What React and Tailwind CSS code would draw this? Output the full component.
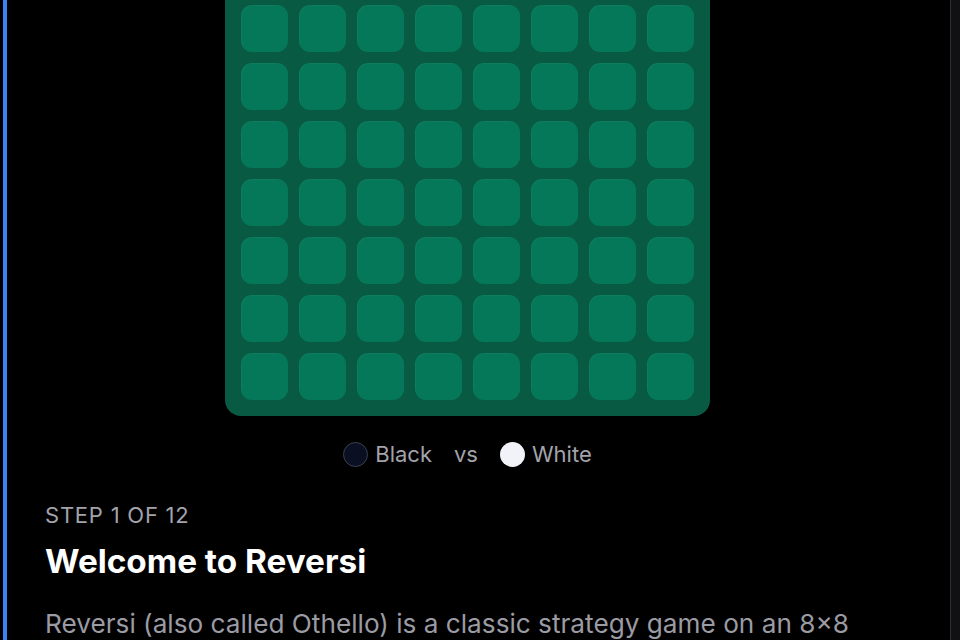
import React from "react";

const ROWS = 8;
const COLS = 8;

function Board() {
  const cells = [];
  for (let r = 0; r < ROWS; r++) {
    for (let c = 0; c < COLS; c++) {
      cells.push(
        <div
          key={`${r}-${c}`}
          className="h-[47px] w-[47px] rounded-[11px] bg-[#06785a] shadow-[inset_1px_1px_0_rgba(255,255,255,0.03)]"
        />
      );
    }
  }
  return (
    <div className="grid grid-cols-8 gap-[11px] rounded-[16px] bg-[#085b42] p-4">
      {cells}
    </div>
  );
}

function Legend() {
  return (
    <div className="flex h-7 items-center justify-center gap-[22px] text-[22px] leading-7 text-[#a3a3ab]">
      <div className="flex items-center gap-[7px]">
        <span className="h-[25px] w-[25px] rounded-full border border-[#3b4150] bg-[#0a0f22]" />
        <span>Black</span>
      </div>
      <span>vs</span>
      <div className="flex items-center gap-[7px]">
        <span className="h-[25px] w-[25px] rounded-full bg-[#f1f3f8]" />
        <span>White</span>
      </div>
    </div>
  );
}

export default function App() {
  return (
    <div
      className="flex h-[640px] w-[960px] overflow-hidden bg-black"
      style={{ fontFamily: "Inter, 'Noto Sans', sans-serif" }}
    >
      <div className="w-[3px] bg-black" />
      <div className="w-[4px] bg-[#3b82f6]" />
      <main className="flex-1 overflow-hidden pl-[38px] pr-[60px]">
        <div className="-mt-[69px] flex flex-col">
          <div className="flex justify-center">
            <Board />
          </div>
          <div className="mt-6">
            <Legend />
          </div>
          <p className="mt-[33px] text-[22px] uppercase leading-7 tracking-[0.035em] text-[#a3a3ab]">
            Step 1 of 12
          </p>
          <h1 className="mt-3 text-[33.3px] font-bold leading-10 text-white">
            Welcome to Reversi
          </h1>
          <p className="mt-6 text-[26.2px] leading-[38px] text-[#9b9ba3]">
            Reversi (also called Othello) is a classic strategy game on an 8×8
            board. Players take turns placing discs, flipping the opponent's
            pieces that are trapped between them.
          </p>
        </div>
      </main>
      <div className="w-px bg-[#2e2e33]" />
      <div className="w-[9px] bg-[#111114]" />
    </div>
  );
}
